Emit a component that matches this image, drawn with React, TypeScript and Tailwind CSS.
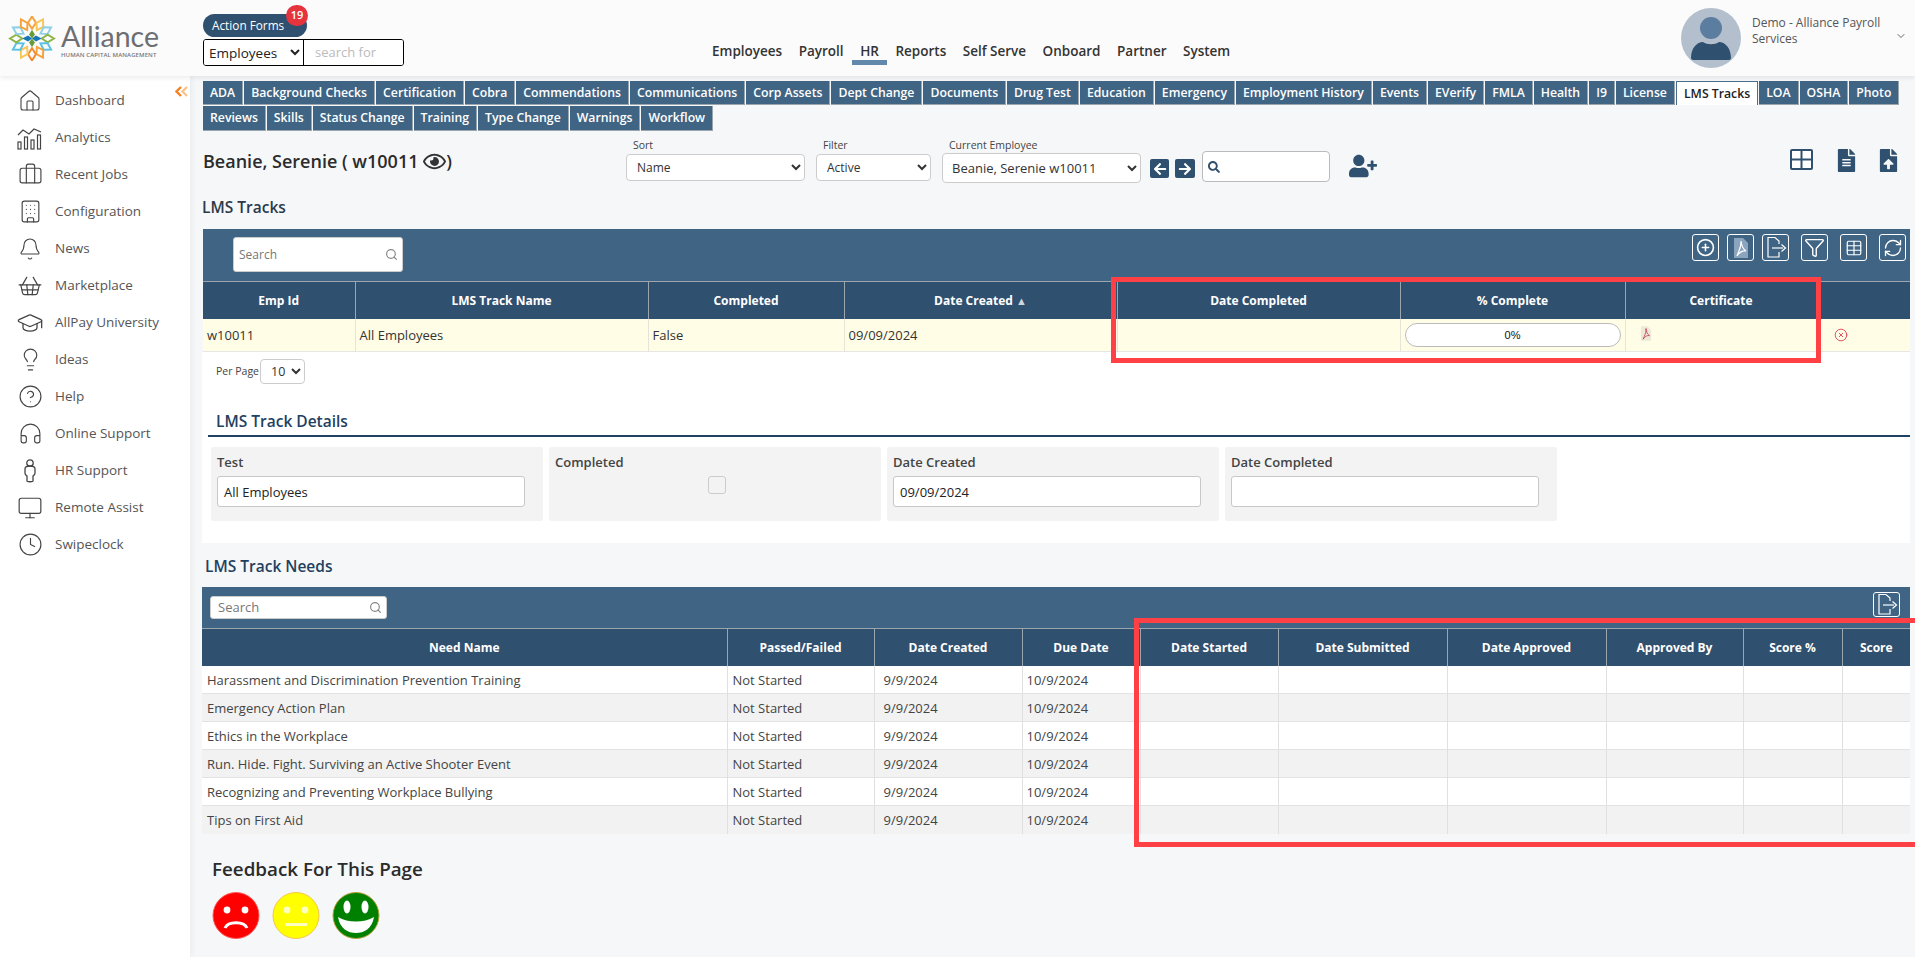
import {
  Bell,
  Briefcase,
  Building,
  ChevronDown,
  CirclePlus,
  CircleHelp,
  CircleX,
  Clock,
  Funnel,
  GraduationCap,
  Headphones,
  House,
  Lightbulb,
  Monitor,
  RefreshCw,
  Search,
  ShoppingBasket,
  Table,
} from "lucide-react";
import { FaArrowLeft, FaArrowRight, FaFileAlt, FaFileUpload, FaRegEye, FaSearch, FaUserPlus } from "react-icons/fa";

const topNav = ["Employees", "Payroll", "HR", "Reports", "Self Serve", "Onboard", "Partner", "System"];

const tabsRow1 = [
  "ADA", "Background Checks", "Certification", "Cobra", "Commendations", "Communications", "Corp Assets",
  "Dept Change", "Documents", "Drug Test", "Education", "Emergency", "Employment History", "Events", "EVerify",
  "FMLA", "Health", "I9", "License", "LMS Tracks", "LOA", "OSHA", "Photo",
];
const tabsRow2 = ["Reviews", "Skills", "Status Change", "Training", "Type Change", "Warnings", "Workflow"];

const needs = [
  "Harassment and Discrimination Prevention Training",
  "Emergency Action Plan",
  "Ethics in the Workplace",
  "Run. Hide. Fight. Surviving an Active Shooter Event",
  "Recognizing and Preventing Workplace Bullying",
  "Tips on First Aid",
];

const needColumns = [
  { label: "Need Name", w: "w-[525px]" },
  { label: "Passed/Failed", w: "w-[147px]" },
  { label: "Date Created", w: "w-[148px]" },
  { label: "Due Date", w: "w-[118px]" },
  { label: "Date Started", w: "w-[138px]" },
  { label: "Date Submitted", w: "w-[169px]" },
  { label: "Date Approved", w: "w-[159px]" },
  { label: "Approved By", w: "w-[137px]" },
  { label: "Score %", w: "w-[99px]" },
  { label: "Score", w: "w-[68px]" },
];

function AnalyticsIcon() {
  return (
    <svg width="26" height="24" viewBox="0 0 26 24" fill="none" stroke="#444" strokeWidth="1.2">
      <path d="M1 9l5-5 6 4 5-5 7 3" />
      <rect x="1" y="16" width="3" height="7" />
      <rect x="7.5" y="11" width="3" height="12" />
      <rect x="14" y="14" width="3" height="9" />
      <rect x="20.5" y="9" width="3" height="14" />
    </svg>
  );
}

function PersonIcon() {
  return (
    <svg width="14" height="24" viewBox="0 0 14 24" fill="none" stroke="#444" strokeWidth="1.3">
      <circle cx="7" cy="4" r="3.2" />
      <path d="M2 10c0-2 2-3 5-3s5 1 5 3v4c0 2-1 2-2 3v5c0 1-6 1-6 0v-5c-1-1-2-1-2-3z" />
    </svg>
  );
}

const sideItems = [
  { label: "Dashboard", icon: <House size={24} strokeWidth={1.1} color="#444" /> },
  { label: "Analytics", icon: <AnalyticsIcon /> },
  { label: "Recent Jobs", icon: <Briefcase size={25} strokeWidth={1.1} color="#444" /> },
  { label: "Configuration", icon: <Building size={25} strokeWidth={1.1} color="#444" /> },
  { label: "News", icon: <Bell size={24} strokeWidth={1.1} color="#444" /> },
  { label: "Marketplace", icon: <ShoppingBasket size={26} strokeWidth={1.1} color="#444" /> },
  { label: "AllPay University", icon: <GraduationCap size={28} strokeWidth={1.1} color="#444" /> },
  { label: "Ideas", icon: <Lightbulb size={25} strokeWidth={1.1} color="#444" /> },
  { label: "Help", icon: <CircleHelp size={25} strokeWidth={1.1} color="#444" /> },
  { label: "Online Support", icon: <Headphones size={25} strokeWidth={1.1} color="#444" /> },
  { label: "HR Support", icon: <PersonIcon /> },
  { label: "Remote Assist", icon: <Monitor size={26} strokeWidth={1.1} color="#444" /> },
  { label: "Swipeclock", icon: <Clock size={25} strokeWidth={1.1} color="#444" /> },
];

const petals = [
  { a: 0, c: "#f6a23a" }, { a: 30, c: "#f7c653" }, { a: 60, c: "#8fd0e6" }, { a: 90, c: "#8fb546" },
  { a: 120, c: "#5cc0e2" }, { a: 150, c: "#f6a23a" }, { a: 180, c: "#f08a2c" }, { a: 210, c: "#f7c653" },
  { a: 240, c: "#5cc0e2" }, { a: 270, c: "#8fb546" }, { a: 300, c: "#8fd0e6" }, { a: 330, c: "#f6a23a" },
];

function LogoMark() {
  return (
    <svg width="48" height="45" viewBox="-24 -23 48 46">
      {petals.map((p) => (
        <polygon
          key={p.a}
          points="0,-10 4,-16 0,-22.5 -4,-16"
          transform={`rotate(${p.a})`}
          fill="none"
          stroke={p.c}
          strokeWidth="2"
        />
      ))}
      <polygon points="0,-9 3,-4 0,0 -3,-4" fill="#6a9a33" />
      <polygon points="0,9 3,4 0,0 -3,4" fill="#6a9a33" />
      <polygon points="-10,0 -4,-3 0,0 -4,3" fill="#1878b4" />
      <polygon points="10,0 4,-3 0,0 4,3" fill="#1878b4" />
    </svg>
  );
}

function ExportIcon() {
  return (
    <svg width="23" height="23" viewBox="0 0 23 23" fill="none" stroke="#fff" strokeWidth="1.2">
      <path d="M15 8V5l-4-3.500H4V21h11v-5" />
      <path d="M8 12h11" />
      <path d="M17.500 8.500l4 3.500-4 3.500" />
    </svg>
  );
}

function PdfMark({ fill, mark, className, weight }: { fill: string; mark: string; className?: string; weight: number }) {
  return (
    <svg viewBox="0 0 14 20" className={className}>
      <path d="M0 0h9l5 5v15H0z" fill={fill} />
      <path d="M7 3c.5 5 2 8 5 10-3-.5-6 .5-9 5 1.500-5 4.500-8 4-15z" fill="none" stroke={mark} strokeWidth={weight} />
    </svg>
  );
}

function Smiley({ bg, ring, kind }: { bg: string; ring: string; kind: "sad" | "flat" | "happy" }) {
  return (
    <svg width="48" height="47" viewBox="0 0 48 47">
      <circle cx="24" cy="23.500" r="23" fill={bg} stroke={ring} strokeWidth="1" />
      {kind === "happy" ? (
        <>
          <ellipse cx="15" cy="15" rx="3.500" ry="6.500" fill="#fff" />
          <ellipse cx="33" cy="15" rx="3.500" ry="6.500" fill="#fff" />
          <path d="M6 25c10 6 26 6 36 0-2 12-10 16-18 16S8 37 6 25z" fill="#fff" />
        </>
      ) : (
        <>
          <circle cx="15" cy="18" r="3.400" fill="#fff" opacity={kind === "flat" ? 0.75 : 1} />
          <circle cx="33" cy="18" r="3.400" fill="#fff" opacity={kind === "flat" ? 0.75 : 1} />
          {kind === "sad" ? (
            <path d="M13 36c3-7 19-7 22 0" fill="none" stroke="#fff" strokeWidth="3" />
          ) : (
            <rect x="13" y="31" width="22" height="3" fill="#fff" opacity="0.75" />
          )}
        </>
      )}
    </svg>
  );
}

function ToolButton({ children, className = "" }: { children: React.ReactNode; className?: string }) {
  return (
    <div className={`w-[27px] h-[27px] border border-white rounded-[3px] flex items-center justify-center text-white ${className}`}>
      {children}
    </div>
  );
}

function TableSearch({ className }: { className: string }) {
  return (
    <div className={`bg-white rounded-[3px] border border-[#ccc] flex items-center justify-between text-[#777] ${className}`}>
      <span>Search</span>
      <Search size={13} color="#888" strokeWidth={2.2} />
    </div>
  );
}

function Th({ children, last }: { children?: React.ReactNode; last?: boolean }) {
  return (
    <th className={`h-[37px] pt-[1px] bg-[#30506f] text-white text-[12px] font-bold text-center border-t border-t-[#9aa5ae] ${last ? "" : "border-r border-r-[#9aa5ae]"}`}>
      {children}
    </th>
  );
}

function DetailCard({ label, children }: { label: string; children: React.ReactNode }) {
  return (
    <div className="w-[332px] h-[74px] bg-[#f3f3f3] rounded-[3px] pl-[6px] pt-[7px]">
      <div className="text-[13px] font-semibold text-[#444] leading-[16px]">{label}</div>
      {children}
    </div>
  );
}

function DetailInput({ value }: { value?: string }) {
  return (
    <div className="mt-[6px] w-[308px] h-[31px] bg-white border border-[#c8c8c8] rounded-[3px] pl-[6px] pt-[2px] flex items-center text-[13px] text-[#222]">
      {value}
    </div>
  );
}

export default function App() {
  return (
    <div className="relative h-screen overflow-hidden bg-[#f6f7f9] font-['Open_Sans',sans-serif] text-[#333]">
      {/* top bar */}
      <header className="relative z-10 h-[76px] bg-[#fbfbfc] shadow-[0_2px_5px_rgba(0,0,0,0.08)] flex">
        <div className="w-[203px] shrink-0 flex items-center pl-[8px]">
          <LogoMark />
          <div className="ml-[5px] mt-[4px]">
            <div className="font-['Lato',sans-serif] text-[28.5px] leading-[31px] text-[#6d6e71]">Alliance</div>
            <div className="text-[6px] leading-[7px] font-semibold text-[#77787b] whitespace-nowrap tracking-[0.1px]">HUMAN CAPITAL MANAGEMENT</div>
          </div>
        </div>
        <div className="w-[202px] shrink-0 pt-[14px]">
          <div className="relative w-[104px] h-[23px] rounded-full bg-[#30506f] text-white text-[11.8px] flex items-center pl-[9px]">
            Action Forms
            <span className="absolute -top-[9px] right-[-1px] w-[22px] h-[21px] rounded-full bg-[#e5343d] text-[11px] font-semibold flex items-center justify-center">19</span>
          </div>
          <div className="mt-[2px] flex h-[27px] w-[201px] border border-black rounded-[3px] overflow-hidden">
            <select className="w-[100px] pl-[1px] text-[13.5px] text-[#222] bg-white border-r border-black outline-none">
              <option>Employees</option>
            </select>
            <div className="flex-1 bg-white text-[13px] text-[#bbb] pl-[11px] flex items-center">search for</div>
          </div>
        </div>
        <nav className="ml-[307px] pt-[41px] flex items-start gap-[16.500px] text-[13.500px] font-semibold text-[#333] leading-[20px]">
          {topNav.map((item) => (
            <div key={item} className="relative whitespace-nowrap">
              {item}
              {item === "HR" && <span className="absolute left-[-8px] right-[-8px] top-[19px] h-[5px] bg-[#6288ab]" />}
            </div>
          ))}
        </nav>
        <div className="ml-auto flex items-start pt-[8px]">
          <svg width="60" height="60" viewBox="0 0 60 60">
            <circle cx="30" cy="30" r="30" fill="#b3bfcd" />
            <ellipse cx="30" cy="20" rx="11" ry="11" fill="#5b7da0" />
            <path d="M10 50c0-10 6-16 12-16 4 3 12 3 16 0 6 0 12 6 12 16 0 2-2 2-4 2H14c-2 0-4 0-4-2z" fill="#30506f" />
          </svg>
          <div className="ml-[11px] w-[140px] text-[12px] leading-[16px] text-[#555] pt-[7px]">Demo - Alliance Payroll Services</div>
          <ChevronDown size={12} color="#666" className="mt-[22px] ml-[3px] mr-[8px]" />
        </div>
      </header>

      <div className="flex">
        {/* side menu */}
        <aside className="relative w-[190px] h-[881px] shrink-0 bg-white shadow-[2px_0_6px_rgba(0,0,0,0.05)] pt-[6px]">
          <svg width="13" height="11" viewBox="0 0 13 11" fill="none" strokeWidth="2.400" className="absolute left-[175px] top-[10px]">
            <path d="M6 1L1.500 5.500 6 10" stroke="#f58220" />
            <path d="M12 1L7.500 5.500 12 10" stroke="#f9c28e" />
          </svg>
          {sideItems.map((item) => (
            <div key={item.label} className="h-[37px] flex items-center text-[13.500px] text-[#555]">
              <div className="w-[60px] h-[28px] -mr-[5px] flex items-center justify-center shrink-0">{item.icon}</div>
              {item.label}
            </div>
          ))}
        </aside>

        <main className="flex-1 min-w-0 pl-[13px] pr-[5px] pt-[5px]">
          {/* module tabs */}
          <div className="flex gap-[1px] h-[24px] text-[12.250px] font-semibold text-white">
            {tabsRow1.map((tab) => (
              <div
                key={tab}
                className={
                  tab === "LMS Tracks"
                    ? "px-[7px] pt-[1px] flex items-center whitespace-nowrap bg-white text-[#222] border border-[#4a6d8c] border-b-0"
                    : "px-[7px] pt-[1px] flex items-center whitespace-nowrap bg-[#3f6484] border-r border-b border-[#9aa5ae]"
                }
              >
                {tab}
              </div>
            ))}
          </div>
          <div className="flex gap-[1px] h-[25px] mt-[1px] text-[12.250px] font-semibold text-white">
            {tabsRow2.map((tab) => (
              <div key={tab} className="px-[7px] pt-[1px] flex items-center whitespace-nowrap bg-[#3f6484] border-r border-b border-[#9aa5ae]">
                {tab}
              </div>
            ))}
          </div>

          {/* employee selector row */}
          <div className="relative flex items-start h-[65px] pt-[7px]">
            <div className="w-[423px] shrink-0 mt-[11px] text-[18px] leading-[24px] font-semibold text-[#2b2b2b] flex items-center whitespace-nowrap">
              Beanie, Serenie ( w10011&nbsp;<FaRegEye size={23} color="#333" />)
            </div>
            <div className="w-[179px] shrink-0">
              <div className="h-[16px] pl-[7px] text-[10.500px] leading-[15px] text-[#444]">Sort</div>
              <select className="w-[179px] h-[27px] pl-[6px] bg-white border border-[#ccc] rounded-[4px] text-[12px] text-[#333] outline-none">
                <option>Name</option>
              </select>
            </div>
            <div className="w-[115px] ml-[11px] shrink-0">
              <div className="h-[16px] pl-[7px] text-[10.500px] leading-[15px] text-[#444]">Filter</div>
              <select className="w-[115px] h-[27px] pl-[6px] bg-white border border-[#ccc] rounded-[4px] text-[12px] text-[#333] outline-none">
                <option>Active</option>
              </select>
            </div>
            <div className="w-[199px] ml-[11px] shrink-0">
              <div className="h-[15px] pl-[7px] text-[10.500px] leading-[15px] text-[#444] whitespace-nowrap">Current Employee</div>
              <select className="w-[199px] h-[30px] pl-[5px] bg-white border border-[#ccc] rounded-[4px] text-[13px] text-[#333] outline-none">
                <option>Beanie, Serenie w10011</option>
              </select>
            </div>
            <div className="ml-[9px] mt-[21px] w-[19px] h-[19px] bg-[#30506f] rounded-[2px] flex items-center justify-center"><FaArrowLeft size={14} color="#fff" /></div>
            <div className="ml-[6px] mt-[21px] w-[20px] h-[19px] bg-[#30506f] rounded-[2px] flex items-center justify-center"><FaArrowRight size={14} color="#fff" /></div>
            <div className="ml-[7px] mt-[13px] w-[128px] h-[31px] bg-white border border-[#bbb] rounded-[4px] pl-[5px] flex items-center"><FaSearch size={12} color="#30506f" /></div>
            <FaUserPlus size={28} color="#30506f" className="ml-[19px] mt-[14px]" />
            <div className="ml-auto mr-[10px] mt-[11px] flex items-start text-[#30506f]">
              <svg width="23" height="21" viewBox="0 0 23 21">
                <rect width="23" height="21" rx="2" fill="#30506f" />
                <rect x="2" y="2" width="8.500" height="7.500" fill="#fff" />
                <rect x="12.500" y="2" width="8.500" height="7.500" fill="#fff" />
                <rect x="2" y="11.500" width="8.500" height="7.500" fill="#fff" />
                <rect x="12.500" y="11.500" width="8.500" height="7.500" fill="#fff" />
              </svg>
              <FaFileAlt size={23} className="ml-[22px]" />
              <FaFileUpload size={23} className="ml-[19px]" />
            </div>
          </div>

          <div className="h-[22px] mb-[11px] -ml-[1px] text-[15.500px] leading-[22px] font-semibold text-[#2b3a4a]">LMS Tracks</div>

          {/* tracks grid */}
          <div className="h-[52px] bg-[#3f6484] flex items-start justify-between pl-[30px] pr-[4px] pt-[5px]">
            <TableSearch className="w-[170px] h-[35px] mt-[3px] pl-[5px] pr-[4px] text-[12px]" />
            <div className="flex">
              <ToolButton><CirclePlus size={19} strokeWidth={2} /></ToolButton>
              <ToolButton className="ml-[8px]"><PdfMark fill="#8aa5bd" mark="#fff" weight={1.2} className="h-[20px] w-[14px]" /></ToolButton>
              <ToolButton className="ml-[8px]"><ExportIcon /></ToolButton>
              <ToolButton className="ml-[12px]"><Funnel size={21} strokeWidth={1.6} /></ToolButton>
              <ToolButton className="ml-[12px]"><Table size={18} strokeWidth={1.6} /></ToolButton>
              <ToolButton className="ml-[12px]"><RefreshCw size={20} strokeWidth={1.6} /></ToolButton>
            </div>
          </div>
          <table className="table-fixed w-full border-collapse">
            <colgroup>
              <col className="w-[152px]" />
              <col className="w-[293px]" />
              <col className="w-[196px]" />
              <col className="w-[273px]" />
              <col className="w-[283px]" />
              <col className="w-[225px]" />
              <col className="w-[192px]" />
              <col />
            </colgroup>
            <thead>
              <tr>
                <Th>Emp Id</Th>
                <Th>LMS Track Name</Th>
                <Th>Completed</Th>
                <Th>Date Created <span className="text-[#cfd6dc] text-[11px]">▲</span></Th>
                <Th>Date Completed</Th>
                <Th>% Complete</Th>
                <Th>Certificate</Th>
                <Th last />
              </tr>
            </thead>
            <tbody>
              <tr className="h-[33px] bg-[#fffde6] text-[13px] text-[#333] border-b border-[#e6e6e6]">
                <td className="px-[4px] pt-[2px] border-r border-[#e4e4d8]">w10011</td>
                <td className="px-[4px] pt-[2px] border-r border-[#e4e4d8]">All Employees</td>
                <td className="px-[4px] pt-[2px] border-r border-[#e4e4d8]">False</td>
                <td className="px-[4px] pt-[2px] border-r border-[#e4e4d8]">09/09/2024</td>
                <td className="px-[4px] border-r border-[#e4e4d8]" />
                <td className="px-[4px] border-r border-[#e4e4d8]">
                  <div className="h-[24px] bg-white border border-[#bbb] rounded-full flex items-center justify-center text-[11px] text-[#111] font-['Liberation_Sans',sans-serif]">0%</div>
                </td>
                <td className="pl-[15px] border-r border-[#e4e4d8]"><PdfMark fill="#eee8d8" mark="#c4233a" weight={1} className="h-[15px] w-[10px] -mt-[3px]" /></td>
                <td className="pl-[16px]"><CircleX size={14} strokeWidth={1.6} color="#e0485a" /></td>
              </tr>
            </tbody>
          </table>

          {/* white detail panel */}
          <div className="-ml-[1px] bg-white pt-[7px] pb-[22px]">
            <div className="flex items-center h-[25px] pl-[14px] text-[10.500px] text-[#444]">
              Per Page
              <select className="ml-[1px] w-[45px] h-[25px] pl-[6px] bg-white border border-[#ccc] rounded-[4px] text-[12.500px] text-[#333] outline-none">
                <option>10</option>
              </select>
            </div>
            <div className="mt-[24px] ml-[6px] h-[29px] pl-[8px] border-b-2 border-[#1f4263] text-[15.500px] leading-[27px] font-semibold text-[#23415f]">LMS Track Details</div>
            <div className="mt-[10px] ml-[9px] flex gap-[6px]">
              <DetailCard label="Test"><DetailInput value="All Employees" /></DetailCard>
              <DetailCard label="Completed">
                <div className="ml-[153px] mt-[6px] w-[18px] h-[18px] border border-[#ccc] rounded-[3px] bg-[#f3f3f3]" />
              </DetailCard>
              <DetailCard label="Date Created"><DetailInput value="09/09/2024" /></DetailCard>
              <DetailCard label="Date Completed"><DetailInput /></DetailCard>
            </div>
          </div>

          <div className="h-[44px] pt-[4px] pl-[2px] flex items-center text-[15.500px] font-semibold text-[#23415f]">LMS Track Needs</div>

          {/* needs grid */}
          <div className="-ml-[1px]">
            <div className="h-[41px] bg-[#3f6484] flex items-start justify-between pl-[8px] pr-[10px]">
              <TableSearch className="w-[177px] h-[23px] mt-[9px] pl-[7px] pr-[4px] text-[13px]" />
              <div className="mt-[5px] w-[27px] h-[25px] border border-white rounded-[3px] flex items-center justify-center"><ExportIcon /></div>
            </div>
            <table className="table-fixed w-full border-collapse">
              <colgroup>
                {needColumns.map((c) => <col key={c.label} className={c.w} />)}
              </colgroup>
              <thead>
                <tr>
                  {needColumns.map((c, i) => <Th key={c.label} last={i === needColumns.length - 1}>{c.label}</Th>)}
                </tr>
              </thead>
              <tbody>
                {needs.map((need, i) => (
                  <tr key={need} className={`h-[28px] text-[13px] text-[#444] ${i % 2 === 0 ? "bg-white" : "bg-[#f2f2f2]"} ${i < 5 ? "border-b border-[#e2e2e2]" : ""}`}>
                    <td className="pl-[5px] pt-[2px] border-r border-[#e0e0e0] whitespace-nowrap">{need}</td>
                    <td className="pl-[5px] pt-[2px] border-r border-[#e0e0e0]">Not Started</td>
                    <td className="pl-[9px] pt-[2px] border-r border-[#e0e0e0]">9/9/2024</td>
                    <td className="pl-[4px] pt-[2px] border-r border-[#e0e0e0]">10/9/2024</td>
                    <td className="border-r border-[#e0e0e0]" />
                    <td className="border-r border-[#e0e0e0]" />
                    <td className="border-r border-[#e0e0e0]" />
                    <td className="border-r border-[#e0e0e0]" />
                    <td className="border-r border-[#e0e0e0]" />
                    <td />
                  </tr>
                ))}
              </tbody>
            </table>
          </div>

          <div className="mt-[21px] pl-[9px] text-[18.800px] leading-[28px] font-semibold text-[#2b2b2b]">Feedback For This Page</div>
          <div className="mt-[9px] ml-[9px] flex gap-[12px]">
            <Smiley bg="#ff0000" ring="#ff5a5a" kind="sad" />
            <Smiley bg="#ffff00" ring="#f2c84b" kind="flat" />
            <Smiley bg="#008000" ring="#b5a13c" kind="happy" />
          </div>
        </main>
      </div>

      {/* red annotation boxes drawn over the screenshot */}
      <div className="absolute left-[1111px] top-[277px] w-[710px] h-[86px] border-[5px] border-[#ff4044] pointer-events-none" />
      <div className="absolute left-[1134px] top-[618px] w-[790px] h-[229px] border-[5px] border-[#ff4044] pointer-events-none" />
    </div>
  );
}
